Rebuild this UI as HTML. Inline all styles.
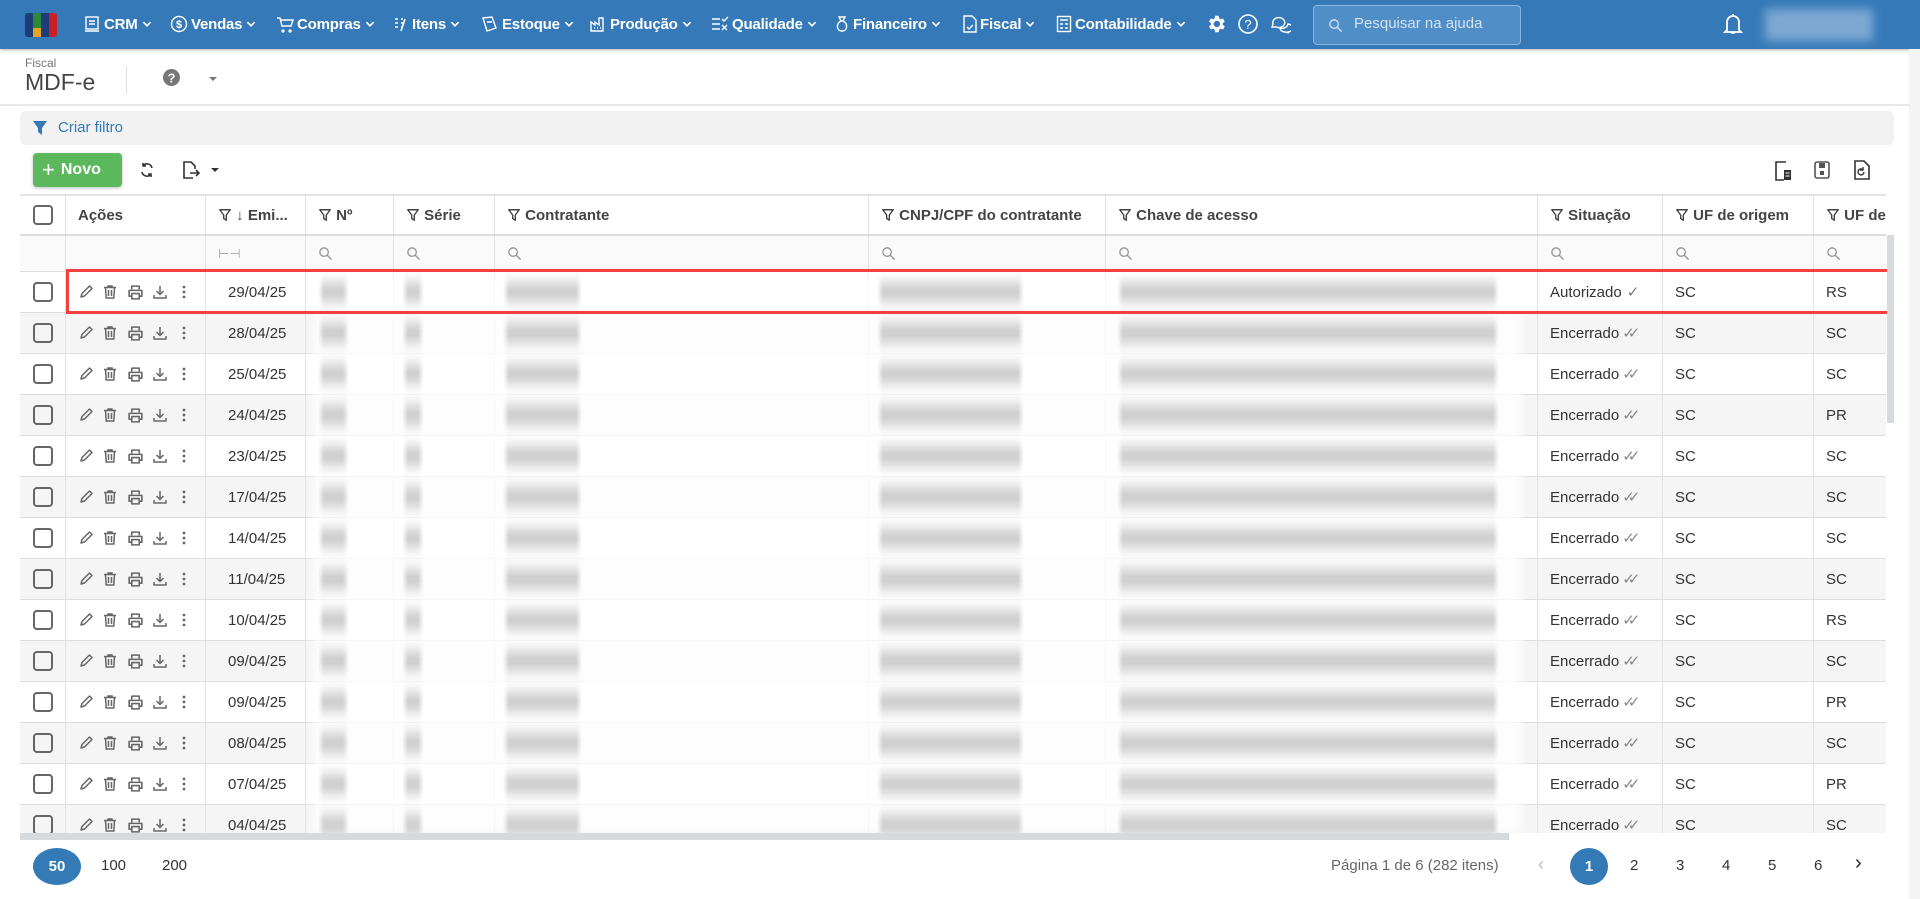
<!DOCTYPE html>
<html><head><meta charset="utf-8">
<style>
*{box-sizing:border-box;margin:0;padding:0}
body{width:1920px;height:899px;overflow:hidden;background:#fff;font-family:"Liberation Sans",Arial,sans-serif;color:#333;position:relative}
.abs{position:absolute}
.top{left:0;top:0;width:1920px;height:49px;background:#3579b8;box-shadow:0 1px 3px rgba(0,0,0,.3)}
.nav{position:absolute;top:15px;color:#fff;font-size:15px;font-weight:bold;display:flex;align-items:center;gap:3px;white-space:nowrap;letter-spacing:-.2px}
.nav svg{flex:none}
.hdrline{left:0;top:104px;width:1910px;height:2px;background:#e8e8e8}
.filter{left:20px;top:111px;width:1874px;height:34px;background:#f2f2f2;border-radius:5px}
.tbl{left:20px;top:194px;width:1866px}
.row{position:absolute;left:0;width:1866px;display:flex;border-bottom:1px solid #ddd}
.c{flex:none;border-right:1px solid #e3e3e3;display:flex;align-items:center;padding-left:12px;font-size:15px;white-space:nowrap;overflow:hidden}
.cb{width:20px;height:20px;border:2px solid #666;border-radius:4px;margin-left:1px}
.w0{width:46px}.w1{width:140px}.w2{width:100px}.w3{width:88px}.w4{width:101px}.w5{width:374px}.w6{width:237px}.w7{width:432px}.w8{width:125px}.w9{width:151px}.w10{width:72px;border-right:none}
.hd .c{color:#444;font-weight:bold;font-size:15px}
.pg{font-size:15px;color:#333;top:857px}
</style></head><body>
<svg width="0" height="0" style="position:absolute">
<symbol id="fun" viewBox="0 0 16 16"><path d="M2 2h12l-4.5 6v6l-3-2V8z" fill="none" stroke="currentColor" stroke-width="1.6" stroke-linejoin="round"/></symbol>
<symbol id="mag" viewBox="0 0 16 16"><circle cx="6.5" cy="6.5" r="4.5" fill="none" stroke="currentColor" stroke-width="1.5"/><path d="M10 10l4.5 4.5" stroke="currentColor" stroke-width="1.6"/></symbol>
<symbol id="pen" viewBox="0 0 16 16"><path d="M3 13l1-3.5L11.5 2 14 4.5 6.5 12z" fill="none" stroke="currentColor" stroke-width="1.5" stroke-linejoin="round"/></symbol>
<symbol id="trash" viewBox="0 0 16 16"><path d="M2 3.5h12M6 3.5V2h4v1.5M3.5 3.5l.7 10.5h7.6l.7-10.5M6.5 6v6M9.5 6v6" fill="none" stroke="currentColor" stroke-width="1.5"/></symbol>
<symbol id="prt" viewBox="0 0 16 16"><path d="M4.5 5V2h7v3M4.5 11.5H2V6h12v5.5h-2.5M4.5 9h7v5h-7z" fill="none" stroke="currentColor" stroke-width="1.5" stroke-linejoin="round"/></symbol>
<symbol id="dl" viewBox="0 0 16 16"><path d="M8 2v8M4.5 7L8 10.5 11.5 7M2 11v3h12v-3" fill="none" stroke="currentColor" stroke-width="1.5"/></symbol>
<symbol id="keb" viewBox="0 0 16 16"><circle cx="8" cy="3" r="1.4" fill="currentColor"/><circle cx="8" cy="8" r="1.4" fill="currentColor"/><circle cx="8" cy="13" r="1.4" fill="currentColor"/></symbol>
<symbol id="chv" viewBox="0 0 10 10"><path d="M2 3.5l3 3 3-3" fill="none" stroke="#fff" stroke-width="1.4"/></symbol>
</svg>

<div class="abs top"></div>
<div class="abs" style="left:25px;top:13px;width:32px;height:24px;border-radius:3px;overflow:hidden;display:flex">
 <div style="width:8px;background:#1d3d7a"></div><div style="width:8px;background:#2a8a3a;position:relative"><div style="position:absolute;bottom:0;left:0;width:8px;height:9px;background:#e8a420"></div></div><div style="width:8px;background:#1d3d7a"></div><div style="width:8px;background:#c91f25"></div>
</div>
<div class="nav" style="left:83px"><svg width="18" height="18" viewBox="0 0 18 18"><rect x="3" y="2" width="12" height="12" fill="none" stroke="#fff" stroke-width="1.4"/><path d="M6 6h6M6 9h6M2 16h14" stroke="#fff" stroke-width="1.4"/></svg>CRM<svg width="12" height="12"><use href="#chv"/></svg></div>
<div class="nav" style="left:170px"><svg width="18" height="18" viewBox="0 0 18 18"><circle cx="9" cy="9" r="7.5" fill="none" stroke="#fff" stroke-width="1.4"/><text x="9" y="13" font-size="11" fill="#fff" text-anchor="middle" font-family="Liberation Sans">$</text></svg>Vendas<svg width="12" height="12"><use href="#chv"/></svg></div>
<div class="nav" style="left:276px"><svg width="18" height="18" viewBox="0 0 18 18"><path d="M1 3h3l2 8h9l2-6H5M7 15a1 1 0 1 0 .1 0M14 15a1 1 0 1 0 .1 0" fill="none" stroke="#fff" stroke-width="1.4"/></svg>Compras<svg width="12" height="12"><use href="#chv"/></svg></div>
<div class="nav" style="left:393px"><svg width="16" height="18" viewBox="0 0 16 18"><path d="M2 4h3M2 8h3M2 12h3M8 4h2M8 8h2M8 12h2M12 4l-4 12" stroke="#fff" stroke-width="1.6"/></svg>Itens<svg width="12" height="12"><use href="#chv"/></svg></div>
<div class="nav" style="left:481px"><svg width="18" height="18" viewBox="0 0 18 18"><path d="M2 3l4 13 9-3-4-11zM6 7h5" fill="none" stroke="#fff" stroke-width="1.4"/></svg>Estoque<svg width="12" height="12"><use href="#chv"/></svg></div>
<div class="nav" style="left:589px"><svg width="18" height="18" viewBox="0 0 18 18"><path d="M2 16V7l4 3V7l4 3V3h4v13zM5 13h1M8 13h1M11 13h1" fill="none" stroke="#fff" stroke-width="1.4"/></svg>Produção<svg width="12" height="12"><use href="#chv"/></svg></div>
<div class="nav" style="left:711px"><svg width="18" height="18" viewBox="0 0 18 18"><path d="M1 4h8M1 9h8M1 14h8M11 4l2 2 4-4M11 10l5 5M16 10l-5 5" fill="none" stroke="#fff" stroke-width="1.4"/></svg>Qualidade<svg width="12" height="12"><use href="#chv"/></svg></div>
<div class="nav" style="left:834px"><svg width="16" height="18" viewBox="0 0 16 18"><path d="M5 2h6l-2 4h-2zM7 6C2 8 2 16 8 16s6-8 1-10" fill="none" stroke="#fff" stroke-width="1.4"/></svg>Financeiro<svg width="12" height="12"><use href="#chv"/></svg></div>
<div class="nav" style="left:963px"><svg width="14" height="18" viewBox="0 0 14 18"><path d="M1 1h8l4 4v12H1zM4 12l2 2 4-4" fill="none" stroke="#fff" stroke-width="1.4"/></svg>Fiscal<svg width="12" height="12"><use href="#chv"/></svg></div>
<div class="nav" style="left:1056px"><svg width="16" height="18" viewBox="0 0 16 18"><rect x="1.5" y="1.5" width="13" height="15" fill="none" stroke="#fff" stroke-width="1.4"/><path d="M4 5h8M4 9h3M9 9h3M4 13h3M9 13h3" stroke="#fff" stroke-width="1.4"/></svg>Contabilidade<svg width="12" height="12"><use href="#chv"/></svg></div>
<svg class="abs" style="left:1205px;top:13px" width="22" height="22" viewBox="0 0 24 24"><path fill="#fff" d="M19.4 13a7.5 7.5 0 0 0 0-2l2.1-1.6-2-3.5-2.5 1a7 7 0 0 0-1.7-1L15 3h-4l-.4 2.9a7 7 0 0 0-1.700 1l-2.5-1-2 3.5L6.500 11a7.5 7.5 0 0 0 0 2l-2.100 1.6 2 3.5 2.500-1a7 7 0 0 0 1.700 1L11 21h4l.4-2.9a7 7 0 0 0 1.700-1l2.500 1 2-3.5zM13 15.5a3.5 3.5 0 1 1 0-7 3.5 3.5 0 0 1 0 7z"/></svg>
<svg class="abs" style="left:1237px;top:13px" width="22" height="22" viewBox="0 0 22 22"><circle cx="11" cy="11" r="9" fill="none" stroke="#fff" stroke-width="1.6"/><text x="11" y="16" font-size="13" fill="#fff" text-anchor="middle" font-family="Liberation Sans">?</text></svg>
<svg class="abs" style="left:1269px;top:13px" width="22" height="22" viewBox="0 0 22 22"><path d="M3 14l1-3a6 5 0 1 1 3 3zM11 15a6 5 0 0 0 8-4l0 0a5 4 0 0 1-1 8l2 1-4-1a5 4 0 0 1-5-4" fill="none" stroke="#fff" stroke-width="1.4"/></svg>
<div class="abs" style="left:1313px;top:5px;width:208px;height:40px;background:#4f8ec7;border:1px solid #8bb5de;border-radius:4px"></div>
<svg class="abs" style="left:1328px;top:18px" width="15" height="15"><use href="#mag" style="color:#cfe0f0"/></svg>
<div class="abs" style="left:1354px;top:15px;font-size:15px;color:#d4e3f2">Pesquisar na ajuda</div>
<svg class="abs" style="left:1722px;top:12px" width="22" height="24" viewBox="0 0 22 24"><path d="M5 18V10a6 6 0 0 1 12 0v8l2 2H3zM9 21h4M11 2v2" fill="none" stroke="#fff" stroke-width="1.8"/></svg>
<div class="abs" style="left:1765px;top:9px;width:108px;height:32px;background:#8fb4da;filter:blur(5px);opacity:.8"></div>

<div class="abs" style="left:1909px;top:49px;width:11px;height:850px;background:#f4f4f4"></div>

<div class="abs" style="left:25px;top:56px;font-size:12px;color:#777">Fiscal</div>
<div class="abs" style="left:25px;top:69px;font-size:23px;color:#444">MDF-e</div>
<div class="abs" style="left:126px;top:66px;width:1px;height:28px;background:#ddd"></div>
<svg class="abs" style="left:163px;top:69px" width="17" height="17" viewBox="0 0 16 16"><circle cx="8" cy="8" r="8" fill="#777"/><text x="8" y="12.5" font-size="12" font-weight="bold" fill="#fff" text-anchor="middle" font-family="Liberation Sans">?</text></svg>
<div class="abs" style="left:209px;top:77px;border:4px solid transparent;border-top:4px solid #777"></div>
<div class="abs hdrline"></div>

<div class="abs filter"></div>
<svg class="abs" style="left:32px;top:120px" width="16" height="16" viewBox="0 0 16 16"><path d="M1 1h14l-5 7v7l-4-3V8z" fill="#337ab7"/></svg>
<div class="abs" style="left:58px;top:119px;font-size:15px;color:#337ab7">Criar filtro</div>

<div class="abs" style="left:33px;top:153px;width:89px;height:34px;background:#5cb85c;border-radius:4px;box-shadow:0 1px 3px rgba(0,0,0,.25);color:#fff;font-size:16px;font-weight:bold;display:flex;align-items:center;padding-left:9px"><span style="font-size:22px;font-weight:normal;margin-right:6px;line-height:1">+</span>Novo</div>
<svg class="abs" style="left:138px;top:161px" width="18" height="18" viewBox="0 0 18 18"><path d="M14 7a5 5 0 0 0-9-2M4 11a5 5 0 0 0 9 2M5 2v3h3M13 16v-3h-3" fill="none" stroke="#333" stroke-width="1.6"/></svg>
<svg class="abs" style="left:182px;top:160px" width="18" height="20" viewBox="0 0 18 20"><path d="M11 18H2V2h7l4 4v3M8 13h9M14 10l3 3-3 3" fill="none" stroke="#333" stroke-width="1.6"/></svg>
<div class="abs" style="left:211px;top:168px;border:4px solid transparent;border-top:4px solid #333"></div>
<svg class="abs" style="left:1773px;top:160px" width="20" height="22" viewBox="0 0 20 22"><path d="M13 2H3v18h8" fill="none" stroke="#333" stroke-width="1.6"/><rect x="11" y="10" width="7" height="10" fill="#333"/><path d="M12.5 13h4M12.5 16h4" stroke="#fff" stroke-width="1"/></svg>
<svg class="abs" style="left:1813px;top:160px" width="18" height="20" viewBox="0 0 18 20"><rect x="2" y="2" width="14" height="16" rx="2" fill="none" stroke="#555" stroke-width="1.6"/><rect x="6" y="3" width="6" height="5" fill="#555"/><rect x="7" y="11" width="4" height="4" fill="#555"/></svg>
<svg class="abs" style="left:1853px;top:159px" width="18" height="22" viewBox="0 0 18 22"><path d="M2 2h9l5 5v13H2z" fill="none" stroke="#333" stroke-width="1.6"/><path d="M11 13a3 3 0 1 1-1-2.3M10 8v3h-3" fill="none" stroke="#333" stroke-width="1.4"/></svg>

<div class="abs tbl">
 <div class="row hd" style="top:0;height:41px;border-top:2px solid #e3e3e3">
  <div class="c w0"><div class="cb"></div></div>
  <div class="c w1">Ações</div>
  <div class="c w2"><svg width="14" height="14"><use href="#fun"/></svg>&nbsp;↓&nbsp;Emi...</div>
  <div class="c w3"><svg width="14" height="14"><use href="#fun"/></svg>&nbsp;Nº</div>
  <div class="c w4"><svg width="14" height="14"><use href="#fun"/></svg>&nbsp;Série</div>
  <div class="c w5"><svg width="14" height="14"><use href="#fun"/></svg>&nbsp;Contratante</div>
  <div class="c w6"><svg width="14" height="14"><use href="#fun"/></svg>&nbsp;CNPJ/CPF do contratante</div>
  <div class="c w7"><svg width="14" height="14"><use href="#fun"/></svg>&nbsp;Chave de acesso</div>
  <div class="c w8"><svg width="14" height="14"><use href="#fun"/></svg>&nbsp;Situação</div>
  <div class="c w9"><svg width="14" height="14"><use href="#fun"/></svg>&nbsp;UF de origem</div>
  <div class="c w10"><svg width="14" height="14"><use href="#fun"/></svg>&nbsp;UF de</div>
 </div>
 <div class="row" style="top:41px;height:37px;border-top:1px solid #ddd;color:#999;background:#fafafa">
  <div class="c w0"></div><div class="c w1"></div>
  <div class="c w2" style="color:#aaa;font-size:13px">⊢⊣</div>
  <div class="c w3"><svg width="15" height="15"><use href="#mag"/></svg></div>
  <div class="c w4"><svg width="15" height="15"><use href="#mag"/></svg></div>
  <div class="c w5"><svg width="15" height="15"><use href="#mag"/></svg></div>
  <div class="c w6"><svg width="15" height="15"><use href="#mag"/></svg></div>
  <div class="c w7"><svg width="15" height="15"><use href="#mag"/></svg></div>
  <div class="c w8"><svg width="15" height="15"><use href="#mag"/></svg></div>
  <div class="c w9"><svg width="15" height="15"><use href="#mag"/></svg></div>
  <div class="c w10"><svg width="15" height="15"><use href="#mag"/></svg></div>
 </div>
</div>

<div class="abs" style="left:20px;top:272px;width:1866px;height:561px;overflow:hidden">
<div style="position:relative">
<div class="row" style="top:0;height:41px;background:#fff"><div class="c w0"><div class="cb"></div></div><div class="c w1"></div><div class="c w2" style="padding-left:22px">29/04/25</div><div class="c w3"></div><div class="c w4"></div><div class="c w5"></div><div class="c w6"></div><div class="c w7"></div><div class="c w8">Autorizado <span style="color:#777;margin-left:5px">✓</span></div><div class="c w9">SC</div><div class="c w10">RS</div></div>
<div class="row" style="top:41px;height:41px;background:#f5f5f5"><div class="c w0"><div class="cb"></div></div><div class="c w1"></div><div class="c w2" style="padding-left:22px">28/04/25</div><div class="c w3"></div><div class="c w4"></div><div class="c w5"></div><div class="c w6"></div><div class="c w7"></div><div class="c w8">Encerrado <span style="color:#888;margin-left:3px;letter-spacing:-7px">✓✓</span></div><div class="c w9">SC</div><div class="c w10">SC</div></div>
<div class="row" style="top:82px;height:41px;background:#fff"><div class="c w0"><div class="cb"></div></div><div class="c w1"></div><div class="c w2" style="padding-left:22px">25/04/25</div><div class="c w3"></div><div class="c w4"></div><div class="c w5"></div><div class="c w6"></div><div class="c w7"></div><div class="c w8">Encerrado <span style="color:#888;margin-left:3px;letter-spacing:-7px">✓✓</span></div><div class="c w9">SC</div><div class="c w10">SC</div></div>
<div class="row" style="top:123px;height:41px;background:#f5f5f5"><div class="c w0"><div class="cb"></div></div><div class="c w1"></div><div class="c w2" style="padding-left:22px">24/04/25</div><div class="c w3"></div><div class="c w4"></div><div class="c w5"></div><div class="c w6"></div><div class="c w7"></div><div class="c w8">Encerrado <span style="color:#888;margin-left:3px;letter-spacing:-7px">✓✓</span></div><div class="c w9">SC</div><div class="c w10">PR</div></div>
<div class="row" style="top:164px;height:41px;background:#fff"><div class="c w0"><div class="cb"></div></div><div class="c w1"></div><div class="c w2" style="padding-left:22px">23/04/25</div><div class="c w3"></div><div class="c w4"></div><div class="c w5"></div><div class="c w6"></div><div class="c w7"></div><div class="c w8">Encerrado <span style="color:#888;margin-left:3px;letter-spacing:-7px">✓✓</span></div><div class="c w9">SC</div><div class="c w10">SC</div></div>
<div class="row" style="top:205px;height:41px;background:#f5f5f5"><div class="c w0"><div class="cb"></div></div><div class="c w1"></div><div class="c w2" style="padding-left:22px">17/04/25</div><div class="c w3"></div><div class="c w4"></div><div class="c w5"></div><div class="c w6"></div><div class="c w7"></div><div class="c w8">Encerrado <span style="color:#888;margin-left:3px;letter-spacing:-7px">✓✓</span></div><div class="c w9">SC</div><div class="c w10">SC</div></div>
<div class="row" style="top:246px;height:41px;background:#fff"><div class="c w0"><div class="cb"></div></div><div class="c w1"></div><div class="c w2" style="padding-left:22px">14/04/25</div><div class="c w3"></div><div class="c w4"></div><div class="c w5"></div><div class="c w6"></div><div class="c w7"></div><div class="c w8">Encerrado <span style="color:#888;margin-left:3px;letter-spacing:-7px">✓✓</span></div><div class="c w9">SC</div><div class="c w10">SC</div></div>
<div class="row" style="top:287px;height:41px;background:#f5f5f5"><div class="c w0"><div class="cb"></div></div><div class="c w1"></div><div class="c w2" style="padding-left:22px">11/04/25</div><div class="c w3"></div><div class="c w4"></div><div class="c w5"></div><div class="c w6"></div><div class="c w7"></div><div class="c w8">Encerrado <span style="color:#888;margin-left:3px;letter-spacing:-7px">✓✓</span></div><div class="c w9">SC</div><div class="c w10">SC</div></div>
<div class="row" style="top:328px;height:41px;background:#fff"><div class="c w0"><div class="cb"></div></div><div class="c w1"></div><div class="c w2" style="padding-left:22px">10/04/25</div><div class="c w3"></div><div class="c w4"></div><div class="c w5"></div><div class="c w6"></div><div class="c w7"></div><div class="c w8">Encerrado <span style="color:#888;margin-left:3px;letter-spacing:-7px">✓✓</span></div><div class="c w9">SC</div><div class="c w10">RS</div></div>
<div class="row" style="top:369px;height:41px;background:#f5f5f5"><div class="c w0"><div class="cb"></div></div><div class="c w1"></div><div class="c w2" style="padding-left:22px">09/04/25</div><div class="c w3"></div><div class="c w4"></div><div class="c w5"></div><div class="c w6"></div><div class="c w7"></div><div class="c w8">Encerrado <span style="color:#888;margin-left:3px;letter-spacing:-7px">✓✓</span></div><div class="c w9">SC</div><div class="c w10">SC</div></div>
<div class="row" style="top:410px;height:41px;background:#fff"><div class="c w0"><div class="cb"></div></div><div class="c w1"></div><div class="c w2" style="padding-left:22px">09/04/25</div><div class="c w3"></div><div class="c w4"></div><div class="c w5"></div><div class="c w6"></div><div class="c w7"></div><div class="c w8">Encerrado <span style="color:#888;margin-left:3px;letter-spacing:-7px">✓✓</span></div><div class="c w9">SC</div><div class="c w10">PR</div></div>
<div class="row" style="top:451px;height:41px;background:#f5f5f5"><div class="c w0"><div class="cb"></div></div><div class="c w1"></div><div class="c w2" style="padding-left:22px">08/04/25</div><div class="c w3"></div><div class="c w4"></div><div class="c w5"></div><div class="c w6"></div><div class="c w7"></div><div class="c w8">Encerrado <span style="color:#888;margin-left:3px;letter-spacing:-7px">✓✓</span></div><div class="c w9">SC</div><div class="c w10">SC</div></div>
<div class="row" style="top:492px;height:41px;background:#fff"><div class="c w0"><div class="cb"></div></div><div class="c w1"></div><div class="c w2" style="padding-left:22px">07/04/25</div><div class="c w3"></div><div class="c w4"></div><div class="c w5"></div><div class="c w6"></div><div class="c w7"></div><div class="c w8">Encerrado <span style="color:#888;margin-left:3px;letter-spacing:-7px">✓✓</span></div><div class="c w9">SC</div><div class="c w10">PR</div></div>
<div class="row" style="top:533px;height:41px;background:#f5f5f5"><div class="c w0"><div class="cb"></div></div><div class="c w1"></div><div class="c w2" style="padding-left:22px">04/04/25</div><div class="c w3"></div><div class="c w4"></div><div class="c w5"></div><div class="c w6"></div><div class="c w7"></div><div class="c w8">Encerrado <span style="color:#888;margin-left:3px;letter-spacing:-7px">✓✓</span></div><div class="c w9">SC</div><div class="c w10">SC</div></div>
</div>
<svg class="abs" style="left:0;top:0" width="200" height="574">
 <defs><g id="acts" style="color:#666"><use href="#pen" x="58" y="12" width="16" height="16"/><use href="#trash" x="82" y="12" width="16" height="16"/><use href="#prt" x="107" y="12" width="17" height="17"/><use href="#dl" x="132" y="12" width="16" height="16"/><use href="#keb" x="156" y="12" width="16" height="16"/></g></defs>
 <use href="#acts" y="0"/><use href="#acts" y="41"/><use href="#acts" y="82"/><use href="#acts" y="123"/><use href="#acts" y="164"/><use href="#acts" y="205"/><use href="#acts" y="246"/><use href="#acts" y="287"/><use href="#acts" y="328"/><use href="#acts" y="369"/><use href="#acts" y="410"/><use href="#acts" y="451"/><use href="#acts" y="492"/><use href="#acts" y="533"/>
</svg>
<div class="abs" style="left:293px;top:0;width:1209px;height:561px;background:rgba(255,255,255,.75);filter:blur(4px)"></div>
</div>
<div class="abs" style="left:0;top:272px;width:1920px;height:561px;overflow:hidden">
 <div style="position:absolute;left:0;top:0;width:1920px;height:561px;background:
 repeating-linear-gradient(to bottom,transparent 0,transparent 11px,rgba(160,160,160,.6) 11px,rgba(160,160,160,.6) 29px,transparent 29px,transparent 41px);
 -webkit-mask:linear-gradient(to right,transparent 318px,#000 324px,#000 343px,transparent 349px,transparent 402px,#000 408px,#000 418px,transparent 424px,transparent 503px,#000 509px,#000 576px,transparent 582px,transparent 877px,#000 883px,#000 1018px,transparent 1024px,transparent 1117px,#000 1123px,#000 1493px,transparent 1499px);filter:blur(7px)"></div>
</div>

<div class="abs" style="left:66px;top:269px;width:1824px;height:45px;border:3px solid #f04040"></div>
<div class="abs" style="left:1887px;top:235px;width:7px;height:188px;background:#d6dadd"></div>
<div class="abs" style="left:20px;top:833px;width:1489px;height:7px;background:#d6dadd"></div>

<div class="abs" style="left:33px;top:848px;width:48px;height:37px;border-radius:50%;background:#337ab7;color:#fff;font-size:15px;font-weight:bold;display:flex;align-items:center;justify-content:center">50</div>
<div class="abs pg" style="left:101px">100</div>
<div class="abs pg" style="left:162px">200</div>
<div class="abs pg" style="left:1331px;color:#666">Página 1 de 6 (282 itens)</div>
<div class="abs pg" style="left:1538px;color:#bbb;font-size:18px;top:854px">‹</div>
<div class="abs" style="left:1570px;top:848px;width:38px;height:37px;border-radius:50%;background:#337ab7;color:#fff;font-size:15px;font-weight:bold;display:flex;align-items:center;justify-content:center">1</div>
<div class="abs pg" style="left:1630px">2</div>
<div class="abs pg" style="left:1676px">3</div>
<div class="abs pg" style="left:1722px">4</div>
<div class="abs pg" style="left:1768px">5</div>
<div class="abs pg" style="left:1814px">6</div>
<div class="abs pg" style="left:1855px;font-size:20px;top:852px;color:#222">›</div>
</body></html>
